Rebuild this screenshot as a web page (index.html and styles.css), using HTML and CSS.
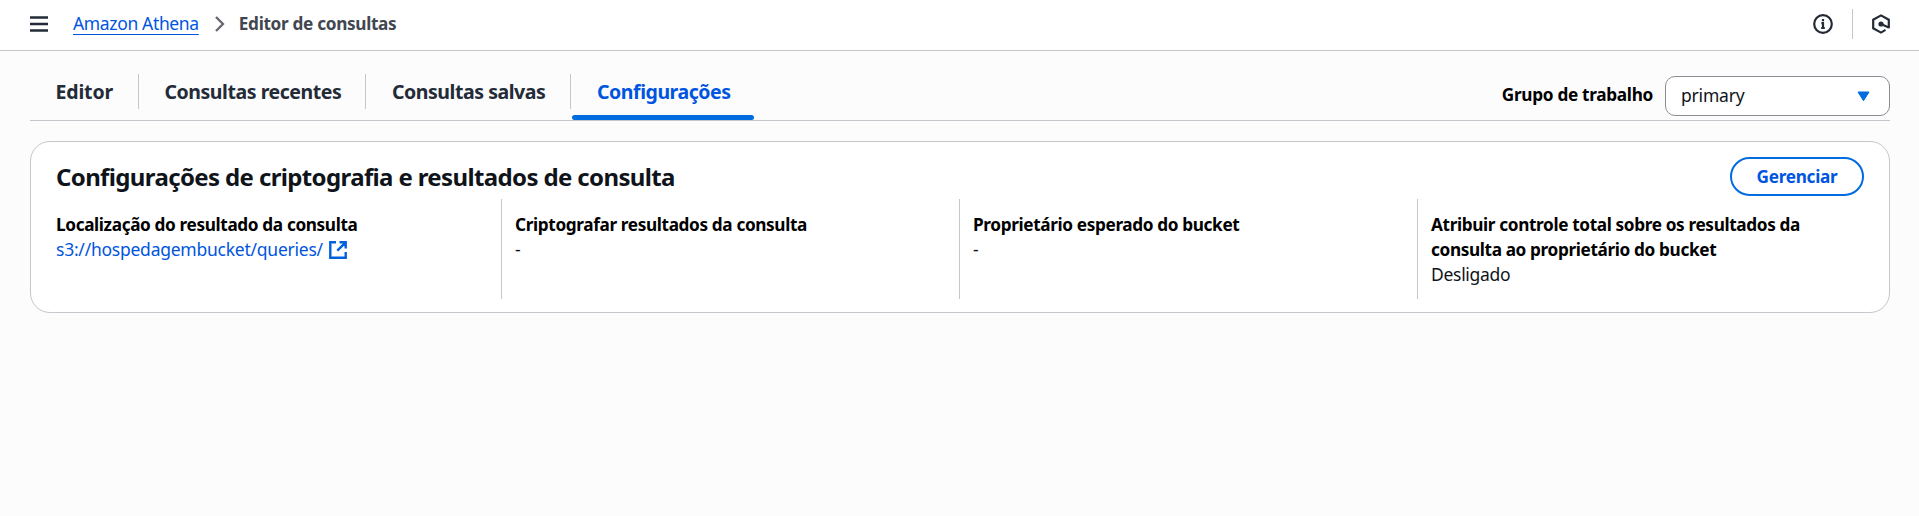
FILE: index.html
```html
<!DOCTYPE html>
<html lang="pt">
<head>
<meta charset="utf-8">
<title>Editor de consultas</title>
<link rel="stylesheet" href="styles.css">
</head>
<body>
<header class="topbar">
  <svg class="menu" width="18" height="16" viewBox="0 0 18 16"><path d="M0 1.5h18M0 8h18M0 14.5h18"/></svg>
  <a class="crumb-link">Amazon Athena</a>
  <svg class="chevron" width="10" height="16" viewBox="0 0 10 16"><path d="M1 1l7 7-7 7"/></svg>
  <span class="crumb">Editor de consultas</span>
  <div class="tools">
    <svg class="info" width="20" height="20" viewBox="0 0 20 20"><circle cx="10" cy="10" r="8.8"/><path d="M10 5v2.3M8.4 9.2H10v5M8.2 14h3.6"/></svg>
    <span class="tool-sep"></span>
    <svg class="hex" width="18" height="20" viewBox="0 0 18 20"><path d="M13.5 15.9L9 18.6 1.2 14.3V5.7L9 1.4l7.8 4.3v8.6"/><path d="M9.5 10.3l7.3 3.3"/><circle cx="9" cy="10" r="2.6"/></svg>
  </div>
</header>
<main class="content">
  <div class="tabs-row">
    <nav class="tabs">
      <a class="tab tab-editor">Editor</a>
      <a class="tab tab-recent">Consultas recentes</a>
      <a class="tab tab-saved">Consultas salvas</a>
      <a class="tab active">Configurações</a>
    </nav>
    <div class="workgroup">
      <label>Grupo de trabalho</label>
      <div class="select"><span>primary</span><svg width="13" height="11" viewBox="0 0 13 11"><path d="M1 1h11L6.5 9.7z"/></svg></div>
    </div>
  </div>
  <section class="card">
    <div class="card-head">
      <h2>Configurações de criptografia e resultados de consulta</h2>
      <button class="manage">Gerenciar</button>
    </div>
    <div class="columns">
      <div class="col"><div class="label">Localização do resultado da consulta</div><a class="s3">s3://hospedagembucket/queries/<svg width="18" height="18" viewBox="0 0 18 18"><path d="M7 1.3H1.3v15.4h15.4V11M10.5 1.3h6.2v6.2M16.4 1.6L8.3 9.7"/></svg></a></div>
      <div class="col"><div class="label">Criptografar resultados da consulta</div><div>-</div></div>
      <div class="col"><div class="label">Proprietário esperado do bucket</div><div>-</div></div>
      <div class="col"><div class="label">Atribuir controle total sobre os resultados da<br>consulta ao proprietário do bucket</div><div class="value">Desligado</div></div>
    </div>
  </section>
</main>
</body>
</html>
```
FILE: styles.css
```css
* { box-sizing: border-box; }
body {
  margin: 0;
  min-height: 516px;
  background: #fcfcfd;
  color: #0f141a;
  font: 17.5px/25px "Noto Sans", "Open Sans", sans-serif;
}
svg { display: block; fill: none; flex: none; }
.topbar {
  display: flex;
  align-items: center;
  height: 51px;
  padding: 0 29px 3px 30px;
  background: #fff;
  border-bottom: 1px solid #c6c6cd;
}
.menu { stroke: #232b37; stroke-width: 2.3; }
.crumb-link {
  margin-left: 25px;
  color: #0055e0;
  letter-spacing: -0.35px;
  text-decoration: underline;
  text-decoration-thickness: 1px;
  text-underline-offset: 4px;
}
.chevron { margin-left: 16px; stroke: #656871; stroke-width: 2.3; }
.crumb { margin-left: 14px; color: #424650; font-size: 17.2px; font-weight: 700; letter-spacing: -0.32px; }
.tools { display: flex; align-items: center; margin-left: auto; }
.info { stroke: #232b37; stroke-width: 2.2; }
.tool-sep { width: 1px; height: 30px; margin: 0 19px; background: #c6c6cd; }
.hex { stroke: #232b37; stroke-width: 2.2; }
.hex circle { fill: #232b37; stroke: none; }
.content { padding: 0 29px 0 30px; }
.tabs-row {
  display: flex;
  justify-content: space-between;
  height: 70px;
  border-bottom: 1px solid #c6c6cd;
}
.tabs { display: flex; padding-top: 23px; }
.tab {
  position: relative;
  height: 35px;
  color: #232b37;
  font-size: 19.5px;
  font-weight: 700;
  line-height: 35px;
  letter-spacing: -0.45px;
  white-space: nowrap;
  border-right: 1px solid #c6c6cd;
}
.tab-editor { width: 109px; padding-left: 25.5px; letter-spacing: -0.15px; }
.tab-recent { width: 227px; padding-left: 25.5px; }
.tab-saved { width: 205px; padding-left: 26px; }
.active { width: 184px; padding-left: 26px; color: #0055e0; border: 0; }
.active::after {
  content: "";
  position: absolute;
  left: 1px;
  top: 41px;
  width: 182px;
  height: 5px;
  border-radius: 3px;
  background: #006ce0;
}
.workgroup { display: flex; gap: 12px; padding-top: 25px; }
.workgroup label { line-height: 38px; color: #000; font-size: 17.2px; font-weight: 700; letter-spacing: -0.3px; }
.select {
  display: flex;
  justify-content: space-between;
  align-items: center;
  width: 225px;
  height: 40px;
  padding: 0 19px 0 15px;
  background: #fff;
  border: 1px solid #8c8c94;
  border-radius: 10px;
  letter-spacing: -0.2px;
}
.select span { padding-bottom: 2px; }
.select path { fill: #006ce0; stroke: #006ce0; stroke-linejoin: round; }
.card {
  height: 172px;
  margin-top: 20px;
  padding: 15px 14px 0 12px;
  background: #fff;
  border: 1px solid #c6c6cd;
  border-radius: 20px;
}
.card-head {
  display: flex;
  justify-content: space-between;
  align-items: center;
  height: 39px;
  margin-bottom: 3px;
  padding: 0 11px 0 13px;
}
h2 { margin: 0; font-size: 24px; line-height: 30px; font-weight: 700; letter-spacing: -0.63px; }
.manage {
  width: 134px;
  height: 39px;
  padding: 0;
  background: #fff;
  border: 2px solid #006ce0;
  border-radius: 20px;
  color: #0055e0;
  font: inherit;
  font-size: 17.2px;
  font-weight: 700;
  letter-spacing: -0.28px;
}
.columns { display: grid; grid-template-columns: repeat(4, 458px); }
.col { height: 100px; padding: 13px 0 0 13px; border-left: 1px solid #c6c6cd; }
.col:first-child { padding-left: 12px; border-color: transparent; }
.label { color: #000; font-size: 17.2px; font-weight: 700; letter-spacing: -0.36px; white-space: nowrap; }
.value { letter-spacing: -0.3px; }
.s3 { display: flex; align-items: center; gap: 6px; color: #0055e0; letter-spacing: -0.24px; }
.s3 path { stroke: #0061e0; stroke-width: 2.4; }
```
